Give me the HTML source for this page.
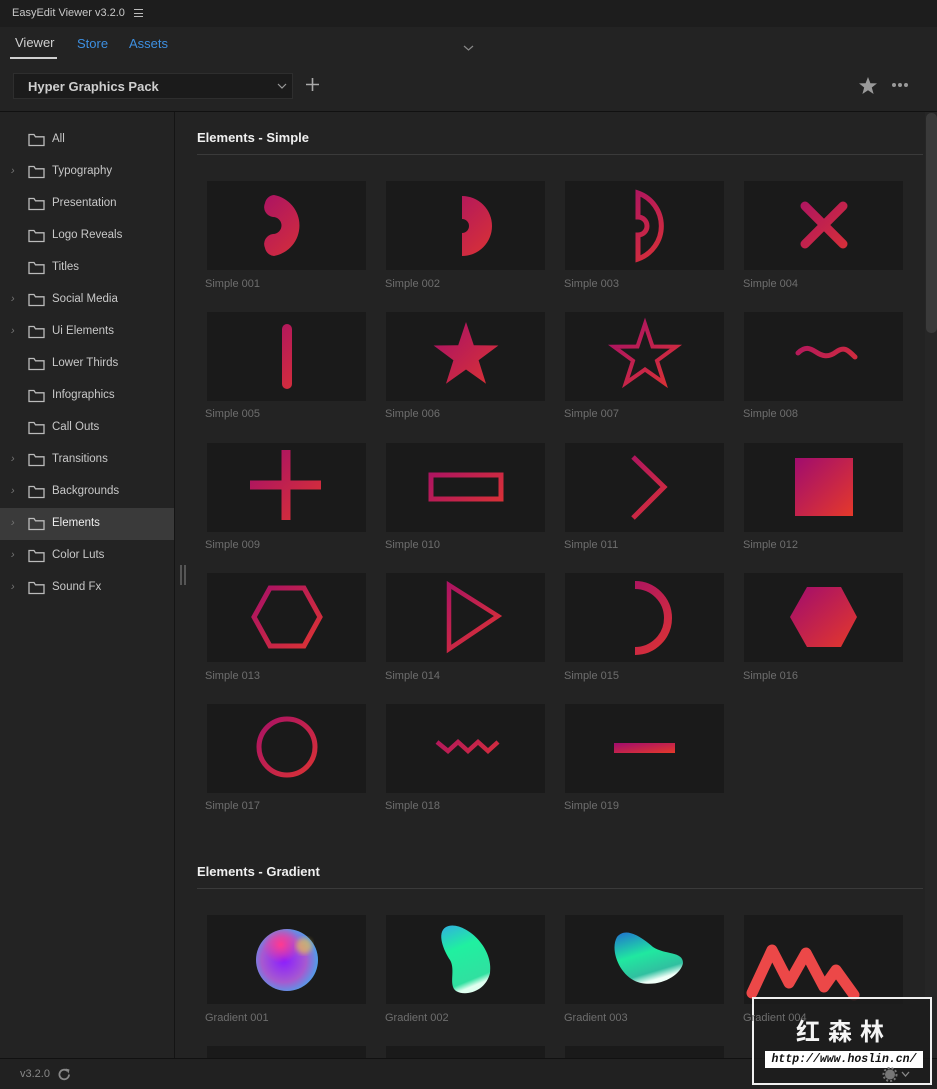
<!DOCTYPE html>
<html><head><meta charset="utf-8"><style>
*{margin:0;padding:0;box-sizing:border-box}
body{width:937px;height:1089px;background:#232323;font-family:"Liberation Sans","Noto Sans CJK SC",sans-serif;position:relative;overflow:hidden;color:#ccc}
.a{position:absolute}
.card{position:absolute;width:159px;height:89px;background:#1a1a1a}
.lbl{position:absolute;font-size:11px;color:#6e6e6e}
.side{font-size:11.5px;color:#c8c8c8}
.item{position:absolute;left:0;width:175px;height:32px}
.item .fold{position:absolute;left:28px;top:9px}
.item span{position:absolute;left:52px;top:9px}
.item .ch{position:absolute;left:11px;top:9px;color:#777;font-size:11px}
</style></head><body>
<svg width="0" height="0" style="position:absolute"><defs>
<linearGradient id="g" x1="0" y1="0" x2="1" y2="1"><stop offset="0" stop-color="#a00c6e"/><stop offset="1" stop-color="#e5392a"/></linearGradient>
<linearGradient id="gs" gradientUnits="userSpaceOnUse" x1="40" y1="5" x2="120" y2="85"><stop offset="0" stop-color="#a00c6e"/><stop offset="1" stop-color="#e5392a"/></linearGradient>
<filter id="bl"><feGaussianBlur stdDeviation="2.5"/></filter>
</defs></svg>

<div class="a" style="left:0;top:0;width:937px;height:27px;background:#1d1d1d"></div>
<div class="a" style="left:12px;top:7px;font-size:11px;color:#c8c8c8">EasyEdit Viewer v3.2.0</div>
<div class="a" style="left:134px;top:9px;width:9px;height:8px;border-top:1px solid #bbb;border-bottom:1px solid #bbb"><div style="margin-top:2.5px;border-top:1px solid #bbb"></div></div>
<div class="a" style="left:0;top:27px;width:937px;height:84px;background:#232323"></div>
<div class="a" style="left:15px;top:35px;font-size:13px;color:#d0d0d0">Viewer</div>
<div class="a" style="left:10px;top:57px;width:47px;height:2px;background:#d0d0d0"></div>
<div class="a" style="left:77px;top:36px;font-size:13px;color:#3d8fe0">Store</div>
<div class="a" style="left:129px;top:36px;font-size:13px;color:#3d8fe0">Assets</div>
<svg class="a" style="left:463px;top:45px" width="11" height="7"><path d="M1 1L5.5 5L10 1" stroke="#888" fill="none" stroke-width="1.2"/></svg>
<div class="a" style="left:13px;top:73px;width:280px;height:26px;background:#1b1b1b;border:1px solid #2e2e2e"></div>
<div class="a" style="left:28px;top:79px;font-size:13px;font-weight:bold;color:#cfcfcf">Hyper Graphics Pack</div>
<svg class="a" style="left:277px;top:83px" width="10" height="6"><path d="M1 1L5 5L9 1" stroke="#999" fill="none" stroke-width="1.2"/></svg>
<svg class="a" style="left:305px;top:77px" width="15" height="15"><path d="M7.5 1V14M1 7.5H14" stroke="#aaa" stroke-width="1.6"/></svg>
<svg class="a" style="left:858px;top:76px" width="20" height="19"><path d="M10 1L12.4 7.2L19 7.4L13.8 11.5L15.6 18L10 14.3L4.4 18L6.2 11.5L1 7.4L7.6 7.2Z" fill="#9a9a9a"/></svg>
<div class="a" style="left:892px;top:83px;width:4px;height:4px;border-radius:2px;background:#999;box-shadow:6px 0 #999,12px 0 #999"></div>
<div class="a" style="left:0;top:111px;width:937px;height:1px;background:#111"></div>

<div class="a" style="left:0;top:112px;width:175px;height:947px;background:#232323"></div>
<div class="a" style="left:174px;top:112px;width:1px;height:947px;background:#141414"></div>
<div class="a" style="left:180px;top:565px;width:2px;height:20px;background:#555;box-shadow:4px 0 #555"></div>
<div class="side">
<div class="item" style="top:124px"><svg class="fold" width="17" height="14"><path d="M1 2.5V12.5H16V3.8H7.5L6 1.5H1Z" fill="none" stroke="#bbb" stroke-width="1.3"/></svg><span>All</span></div>
<div class="item" style="top:156px"><i class="ch">›</i><svg class="fold" width="17" height="14"><path d="M1 2.5V12.5H16V3.8H7.5L6 1.5H1Z" fill="none" stroke="#bbb" stroke-width="1.3"/></svg><span>Typography</span></div>
<div class="item" style="top:188px"><svg class="fold" width="17" height="14"><path d="M1 2.5V12.5H16V3.8H7.5L6 1.5H1Z" fill="none" stroke="#bbb" stroke-width="1.3"/></svg><span>Presentation</span></div>
<div class="item" style="top:220px"><svg class="fold" width="17" height="14"><path d="M1 2.5V12.5H16V3.8H7.5L6 1.5H1Z" fill="none" stroke="#bbb" stroke-width="1.3"/></svg><span>Logo Reveals</span></div>
<div class="item" style="top:252px"><svg class="fold" width="17" height="14"><path d="M1 2.5V12.5H16V3.8H7.5L6 1.5H1Z" fill="none" stroke="#bbb" stroke-width="1.3"/></svg><span>Titles</span></div>
<div class="item" style="top:284px"><i class="ch">›</i><svg class="fold" width="17" height="14"><path d="M1 2.5V12.5H16V3.8H7.5L6 1.5H1Z" fill="none" stroke="#bbb" stroke-width="1.3"/></svg><span>Social Media</span></div>
<div class="item" style="top:316px"><i class="ch">›</i><svg class="fold" width="17" height="14"><path d="M1 2.5V12.5H16V3.8H7.5L6 1.5H1Z" fill="none" stroke="#bbb" stroke-width="1.3"/></svg><span>Ui Elements</span></div>
<div class="item" style="top:348px"><svg class="fold" width="17" height="14"><path d="M1 2.5V12.5H16V3.8H7.5L6 1.5H1Z" fill="none" stroke="#bbb" stroke-width="1.3"/></svg><span>Lower Thirds</span></div>
<div class="item" style="top:380px"><svg class="fold" width="17" height="14"><path d="M1 2.5V12.5H16V3.8H7.5L6 1.5H1Z" fill="none" stroke="#bbb" stroke-width="1.3"/></svg><span>Infographics</span></div>
<div class="item" style="top:412px"><svg class="fold" width="17" height="14"><path d="M1 2.5V12.5H16V3.8H7.5L6 1.5H1Z" fill="none" stroke="#bbb" stroke-width="1.3"/></svg><span>Call Outs</span></div>
<div class="item" style="top:444px"><i class="ch">›</i><svg class="fold" width="17" height="14"><path d="M1 2.5V12.5H16V3.8H7.5L6 1.5H1Z" fill="none" stroke="#bbb" stroke-width="1.3"/></svg><span>Transitions</span></div>
<div class="item" style="top:476px"><i class="ch">›</i><svg class="fold" width="17" height="14"><path d="M1 2.5V12.5H16V3.8H7.5L6 1.5H1Z" fill="none" stroke="#bbb" stroke-width="1.3"/></svg><span>Backgrounds</span></div>
<div class="item" style="top:508px;background:#3a3a3a;width:174px"><i class="ch">›</i><svg class="fold" width="17" height="14"><path d="M1 2.5V12.5H16V3.8H7.5L6 1.5H1Z" fill="none" stroke="#bbb" stroke-width="1.3"/></svg><span style="color:#eee">Elements</span></div>
<div class="item" style="top:540px"><i class="ch">›</i><svg class="fold" width="17" height="14"><path d="M1 2.5V12.5H16V3.8H7.5L6 1.5H1Z" fill="none" stroke="#bbb" stroke-width="1.3"/></svg><span>Color Luts</span></div>
<div class="item" style="top:572px"><i class="ch">›</i><svg class="fold" width="17" height="14"><path d="M1 2.5V12.5H16V3.8H7.5L6 1.5H1Z" fill="none" stroke="#bbb" stroke-width="1.3"/></svg><span>Sound Fx</span></div>
</div>

<div class="a" style="left:925px;top:112px;width:12px;height:947px;background:#262626"></div>
<div class="a" style="left:926px;top:113px;width:11px;height:220px;background:#3a3a3a;border-radius:5px"></div>

<div class="a" style="left:197px;top:130px;font-size:13px;font-weight:bold;color:#f0f0f0">Elements - Simple</div>
<div class="a" style="left:197px;top:154px;width:726px;height:1px;background:#3a3a3a"></div>

<div class="card" style="left:207px;top:181px"><svg width="159" height="89"><path d="M58 22A10 10 0 0 1 67 14A31 31 0 0 1 67 75A10 10 0 0 1 58 67A10 10 0 0 1 66 53A8 8 0 0 0 66 36A10 10 0 0 1 58 22Z" fill="url(#gs)"/></svg></div>
<div class="card" style="left:386px;top:181px"><svg width="159" height="89"><path d="M76 15A30 30 0 0 1 76 75V52A7 7 0 0 0 76 38Z" fill="url(#gs)"/></svg></div>
<div class="card" style="left:565px;top:181px"><svg width="159" height="89"><path d="M73 12A35 35 0 0 1 73 78V54A9 9 0 0 0 73 36Z" fill="none" stroke="url(#gs)" stroke-width="5"/></svg></div>
<div class="card" style="left:744px;top:181px"><svg width="159" height="89"><path d="M61 25L99 63M99 25L61 63" stroke="url(#gs)" stroke-width="9" stroke-linecap="round"/></svg></div>
<div class="lbl" style="left:205px;top:278px">Simple 001</div><div class="lbl" style="left:385px;top:278px">Simple 002</div><div class="lbl" style="left:564px;top:278px">Simple 003</div><div class="lbl" style="left:743px;top:278px">Simple 004</div>

<div class="card" style="left:207px;top:312px"><svg width="159" height="89"><path d="M80 17V72" stroke="url(#gs)" stroke-width="10" stroke-linecap="round"/></svg></div>
<div class="card" style="left:386px;top:312px"><svg width="159" height="89"><path d="M80 10L87.8 33.3L112.4 33.5L92.6 48.2L100 71.7L80 57.5L60 71.7L67.4 48.2L47.6 33.5L72.2 33.3Z" fill="url(#gs)"/></svg></div>
<div class="card" style="left:565px;top:312px"><svg width="159" height="89"><path d="M80 12L87.5 34.5L111 34.7L92 48.7L99.2 71L80 57.5L60.8 71L68 48.7L49 34.7L72.5 34.5Z" fill="none" stroke="url(#gs)" stroke-width="4"/></svg></div>
<div class="card" style="left:744px;top:312px"><svg width="159" height="89"><path d="M54 41C61 34 66 36 72 40S84 46 92 40S104 38 111 45" fill="none" stroke="url(#gs)" stroke-width="5" stroke-linecap="round"/></svg></div>
<div class="lbl" style="left:205px;top:408px">Simple 005</div><div class="lbl" style="left:385px;top:408px">Simple 006</div><div class="lbl" style="left:564px;top:408px">Simple 007</div><div class="lbl" style="left:743px;top:408px">Simple 008</div>

<div class="card" style="left:207px;top:443px"><svg width="159" height="89"><path d="M79 7V77M43 42H114" stroke="url(#gs)" stroke-width="9"/></svg></div>
<div class="card" style="left:386px;top:443px"><svg width="159" height="89"><rect x="45" y="32" width="70" height="24" fill="none" stroke="url(#gs)" stroke-width="5"/></svg></div>
<div class="card" style="left:565px;top:443px"><svg width="159" height="89"><path d="M68 14L99 44L68 75" fill="none" stroke="url(#gs)" stroke-width="5"/></svg></div>
<div class="card" style="left:744px;top:443px"><svg width="159" height="89"><rect x="51" y="15" width="58" height="58" fill="url(#g)"/></svg></div>
<div class="lbl" style="left:205px;top:539px">Simple 009</div><div class="lbl" style="left:385px;top:539px">Simple 010</div><div class="lbl" style="left:564px;top:539px">Simple 011</div><div class="lbl" style="left:743px;top:539px">Simple 012</div>

<div class="card" style="left:207px;top:573px"><svg width="159" height="89"><path d="M63 15H97L113 44L97 73H63L47 44Z" fill="none" stroke="url(#gs)" stroke-width="5"/></svg></div>
<div class="card" style="left:386px;top:573px"><svg width="159" height="89"><path d="M63 12L112 43L63 76Z" fill="none" stroke="url(#gs)" stroke-width="4.5"/></svg></div>
<div class="card" style="left:565px;top:573px"><svg width="159" height="89"><path d="M70 12A32 32 0 0 1 70 78" fill="none" stroke="url(#gs)" stroke-width="8"/></svg></div>
<div class="card" style="left:744px;top:573px"><svg width="159" height="89"><path d="M63 14H97L113 44L97 74H63L46 44Z" fill="url(#g)"/></svg></div>
<div class="lbl" style="left:205px;top:670px">Simple 013</div><div class="lbl" style="left:385px;top:670px">Simple 014</div><div class="lbl" style="left:564px;top:670px">Simple 015</div><div class="lbl" style="left:743px;top:670px">Simple 016</div>

<div class="card" style="left:207px;top:704px"><svg width="159" height="89"><circle cx="80" cy="43" r="28" fill="none" stroke="url(#gs)" stroke-width="5"/></svg></div>
<div class="card" style="left:386px;top:704px"><svg width="159" height="89"><path d="M51 38L62 47L72 38L82 47L92 38L102 47L112 38" fill="none" stroke="url(#gs)" stroke-width="4.5"/></svg></div>
<div class="card" style="left:565px;top:704px"><svg width="159" height="89"><rect x="49" y="39" width="61" height="10" fill="url(#g)"/></svg></div>
<div class="lbl" style="left:205px;top:800px">Simple 017</div><div class="lbl" style="left:385px;top:800px">Simple 018</div><div class="lbl" style="left:564px;top:800px">Simple 019</div>

<div class="a" style="left:197px;top:864px;font-size:13px;font-weight:bold;color:#f0f0f0">Elements - Gradient</div>
<div class="a" style="left:197px;top:888px;width:726px;height:1px;background:#3a3a3a"></div>
<div class="card" style="left:207px;top:915px"><svg width="159" height="89"><defs><radialGradient id="r1" cx="0.45" cy="0.5" r="0.6"><stop offset="0" stop-color="#8a1cff"/><stop offset="0.6" stop-color="#a65ad0"/><stop offset="1" stop-color="#3ab0f0"/></radialGradient><radialGradient id="r1b" cx="0.4" cy="0.25" r="0.3"><stop offset="0" stop-color="#ff3a90"/><stop offset="1" stop-color="#ff3a90" stop-opacity="0"/></radialGradient></defs><circle cx="80" cy="45" r="31" fill="url(#r1)"/><circle cx="80" cy="45" r="31" fill="url(#r1b)"/><circle cx="97" cy="31" r="8" fill="#f0d040" opacity="0.6" filter="url(#bl)"/></svg></div>
<div class="card" style="left:386px;top:915px"><svg width="159" height="89"><defs><linearGradient id="r2" x1="0" y1="0" x2="0.3" y2="1"><stop offset="0" stop-color="#30b0e0"/><stop offset="0.4" stop-color="#20f0a0"/><stop offset="0.9" stop-color="#30e0a0"/><stop offset="1" stop-color="#e0fff0"/></linearGradient></defs><path d="M60 12C75 4 108 30 104 58C100 76 80 82 70 76C62 70 70 55 64 45C58 36 50 18 60 12Z" fill="url(#r2)"/></svg></div>
<div class="card" style="left:565px;top:915px"><svg width="159" height="89"><defs><linearGradient id="r3" x1="0" y1="0" x2="0.4" y2="1"><stop offset="0" stop-color="#2070d0"/><stop offset="0.5" stop-color="#20e8a0"/><stop offset="0.85" stop-color="#30c0a0"/><stop offset="1" stop-color="#f0fff8"/></linearGradient></defs><path d="M52 22C60 12 74 20 88 32C100 40 118 36 118 48C116 60 96 72 76 68C56 64 44 36 52 22Z" fill="url(#r3)"/></svg></div>
<div class="card" style="left:744px;top:915px"></div>
<div class="lbl" style="left:205px;top:1012px">Gradient 001</div><div class="lbl" style="left:385px;top:1012px">Gradient 002</div><div class="lbl" style="left:564px;top:1012px">Gradient 003</div>
<div class="card" style="left:207px;top:1046px;height:13px"></div><div class="card" style="left:386px;top:1046px;height:13px"></div><div class="card" style="left:565px;top:1046px;height:13px"></div>

<div class="a" style="left:0;top:1058px;width:937px;height:31px;background:#212121;border-top:1px solid #111"></div>
<div class="a" style="left:20px;top:1068px;font-size:11px;color:#888">v3.2.0</div>
<svg class="a" style="left:57px;top:1067px" width="15" height="15"><path d="M12 7.5A4.8 4.8 0 1 1 10.5 4" fill="none" stroke="#888" stroke-width="1.8"/><path d="M8.5 1.5L12.5 2.5L11.5 6.5Z" fill="#888"/></svg>

<svg class="a" style="left:744px;top:935px" width="125" height="70"><path d="M8 58L28 15L45 48L62 18L80 52L92 35L110 60" fill="none" stroke="#ec4848" stroke-width="11" stroke-linejoin="round" stroke-linecap="round"/></svg>
<div class="a" style="left:752px;top:997px;width:180px;height:88px;background:rgba(28,28,28,0.85);border:2px solid #f0f0f0"></div>
<div class="lbl" style="left:743px;top:1012px">Gradient 004</div>
<div class="a" style="left:796px;top:1012px;font-size:24px;font-weight:bold;color:#f5f5f5;letter-spacing:8px">红森林</div>
<div class="a" style="left:765px;top:1051px;width:158px;height:17px;background:#fff;font-family:'Liberation Mono',monospace;font-size:11.5px;font-style:italic;font-weight:bold;color:#111;line-height:17px;text-align:center;overflow:hidden">http://www.hoslin.cn/</div>
<svg class="a" style="left:882px;top:1067px" width="30" height="15"><circle cx="8" cy="7.5" r="5" fill="#777"/><circle cx="8" cy="7.5" r="6.5" fill="none" stroke="#777" stroke-width="2" stroke-dasharray="2 2"/><path d="M20 5L23.5 9L27 5" stroke="#888" fill="none" stroke-width="1.3"/></svg>
</body></html>
